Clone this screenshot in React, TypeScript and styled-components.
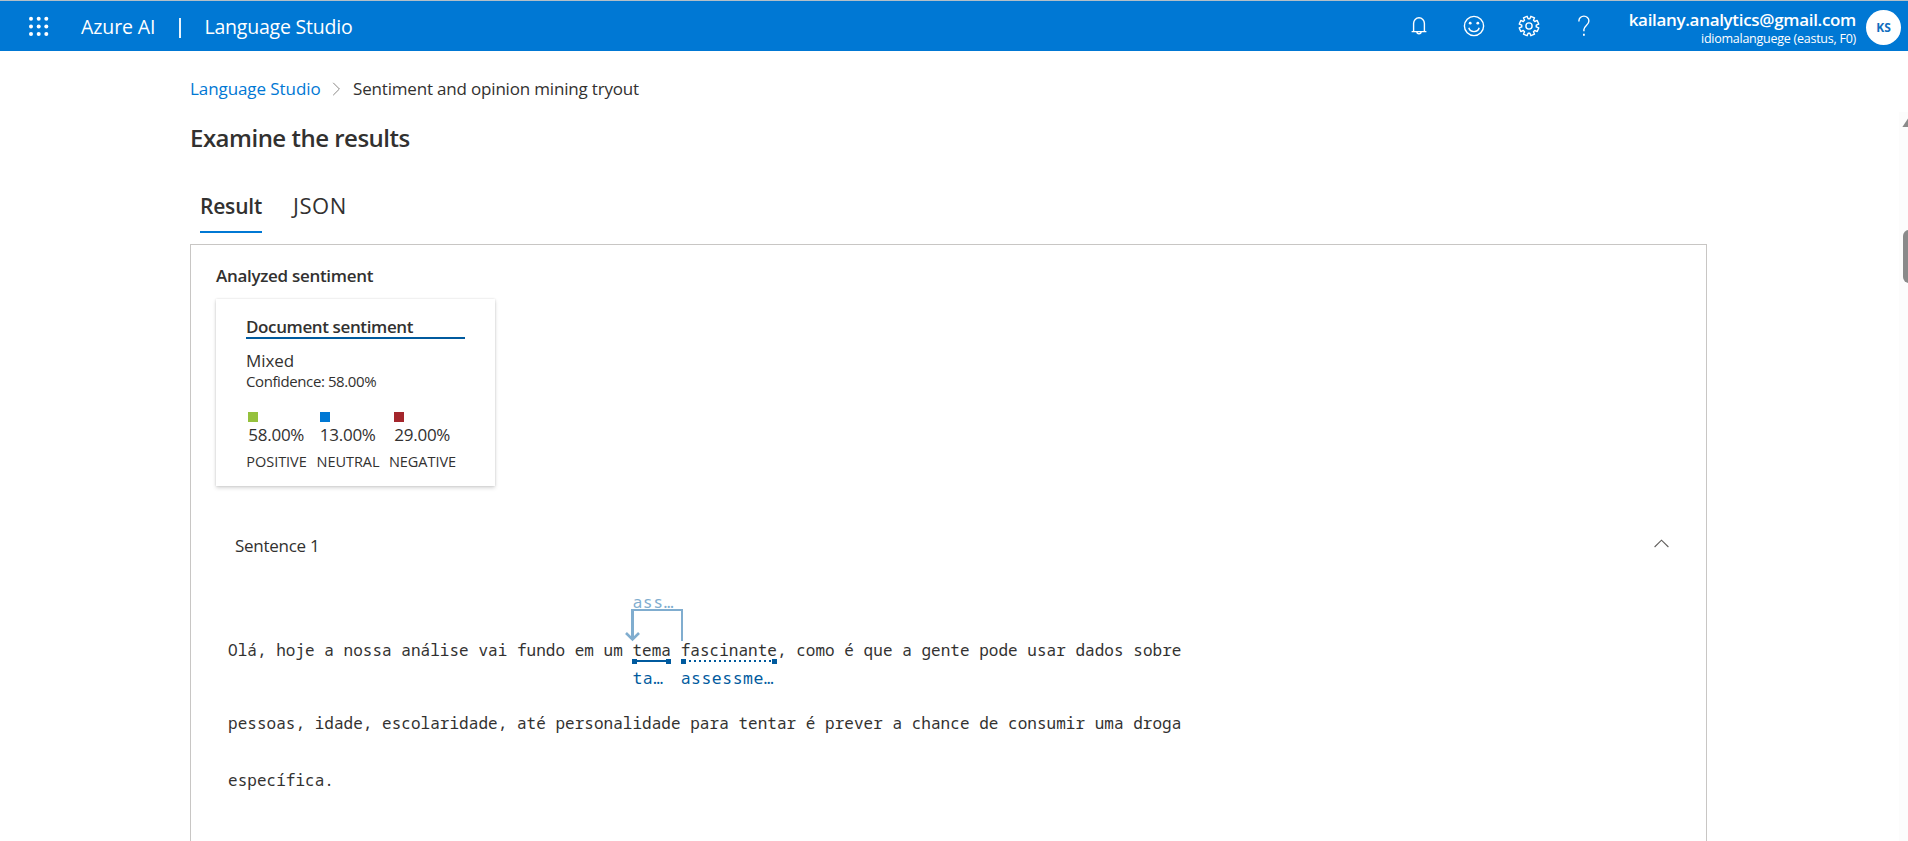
import React from 'react';
import styled, { createGlobalStyle } from 'styled-components';

const blue = '#0078d4';
const darkBlue = '#005a9e';
const paleBlue = '#80adcf';
const ink = '#323130';

const GlobalStyle = createGlobalStyle`
  * { box-sizing: border-box; }
  body {
    margin: 0;
    overflow: hidden;
    background: #fff;
    color: ${ink};
    font-family: 'Open Sans', 'Noto Sans', sans-serif;
    font-size: 17px;
  }
`;

const Page = styled.div`
  display: flex;
  flex-direction: column;
  height: 841px;
  overflow: hidden;
`;

const Header = styled.header`
  display: flex;
  align-items: center;
  flex: none;
  height: 51px;
  padding: 0 7px 0 29px;
  border-top: 1px solid #b3bfc7;
  background: ${blue};
  color: #fff;
`;

const Product = styled.span<{ $spacing: number }>`
  font-size: 19.5px;
  line-height: 28px;
  letter-spacing: ${p => p.$spacing}px;
  white-space: nowrap;
  padding-top: 1px;
`;

const Brand = styled.div`
  display: flex;
  align-items: center;
  margin-left: 32px;
`;

const Divider = styled.span`
  width: 2px;
  height: 20px;
  margin: 4px 23px 0 24px;
  background: #e8f3fc;
`;

const Tools = styled.nav`
  display: flex;
  margin-left: auto;
`;

const Tool = styled.button`
  display: flex;
  align-items: center;
  justify-content: center;
  width: 55px;
  height: 50px;
  padding: 0;
  border: 0;
  background: none;
  color: #fff;
`;

const Account = styled.div`
  display: flex;
  flex-direction: column;
  align-items: flex-end;
  gap: 1px;
  width: 245px;
  margin-top: 3px;
  white-space: nowrap;
`;

const Email = styled.span`
  font-weight: 600;
  line-height: 21px;
  letter-spacing: -0.32px;
`;

const Resource = styled.span`
  font-size: 12.5px;
  line-height: 15px;
  letter-spacing: -0.25px;
`;

const Avatar = styled.span`
  display: flex;
  align-items: center;
  justify-content: center;
  width: 35px;
  height: 35px;
  margin-left: 10px;
  margin-top: 2px;
  border-radius: 50%;
  background: #fff;
  color: #106ebe;
  font-size: 12px;
  font-weight: 700;
`;

const Body = styled.div`
  display: flex;
  flex: 1;
  min-height: 0;
`;

const Main = styled.main`
  display: flex;
  flex-direction: column;
  flex: 1;
  padding: 26px 201px 0 190px;
`;

const Breadcrumb = styled.div`
  display: flex;
  align-items: center;
  height: 24px;
  line-height: 24px;
  white-space: nowrap;
`;

const CrumbLink = styled.a`
  color: ${blue};
  letter-spacing: -0.08px;
  width: 142px;
`;

const Crumb = styled.span`
  margin-left: 12px;
  letter-spacing: -0.18px;
`;

const Heading = styled.h1`
  margin: 21px 0 0;
  font-size: 24px;
  font-weight: 600;
  line-height: 32px;
  letter-spacing: -0.5px;
`;

const Tabs = styled.div`
  display: flex;
  gap: 31px;
  margin: 38px 0 0 10px;
`;

const Tab = styled.div<{ $active?: boolean }>`
  height: 41px;
  line-height: ${p => (p.$active ? 28 : 26)}px;
  font-size: ${p => (p.$active ? 21 : 22)}px;
  font-weight: ${p => (p.$active ? 600 : 400)};
  letter-spacing: ${p => (p.$active ? -0.2 : 0.5)}px;
  border-bottom: 2px solid ${p => (p.$active ? blue : 'transparent')};
`;

const Panel = styled.section`
  display: flex;
  flex-direction: column;
  flex: 1;
  margin-top: 11px;
  padding-top: 19px;
  border: 1px solid #c8c6c4;
  border-bottom: 0;
`;

const SectionTitle = styled.h2`
  margin: 0 25px;
  font-size: 17px;
  font-weight: 600;
  line-height: 24px;
  letter-spacing: -0.3px;
`;

const Card = styled.div`
  width: 279px;
  height: 187px;
  margin: 11px 0 0 25px;
  padding: 16px 30px 0;
  background: #fff;
  box-shadow: 0 2px 4px rgba(0, 0, 0, 0.16), 0 0 2px rgba(0, 0, 0, 0.12);
`;

const CardTitle = styled.h3`
  margin: 0;
  height: 24px;
  border-bottom: 2px solid ${darkBlue};
  font-size: 17px;
  font-weight: 600;
  line-height: 24px;
  letter-spacing: -0.38px;
`;

const Verdict = styled.div`
  margin-top: 11px;
  line-height: 22px;
  letter-spacing: -0.1px;
`;

const Confidence = styled.div`
  font-size: 15px;
  line-height: 18px;
  letter-spacing: -0.4px;
`;

const Metrics = styled.div`
  display: grid;
  grid-template-columns: 61px 63px 67px;
  column-gap: 9.5px;
  justify-items: center;
  margin: 22px -6px 0 0;
`;

const Metric = styled.div`
  display: flex;
  flex-direction: column;
  align-items: center;
`;

const Value = styled.div`
  display: flex;
  flex-direction: column;
  width: 56.5px;
  line-height: 26px;
  letter-spacing: -0.25px;
`;

const Swatch = styled.span<{ $color: string }>`
  width: 10px;
  height: 10px;
  background: ${p => p.$color};
`;

const Label = styled.div`
  margin-top: 3px;
  font-size: 14.5px;
  line-height: 22px;
  letter-spacing: -0.05px;
`;

const SentenceHeader = styled.div`
  display: flex;
  align-items: center;
  justify-content: space-between;
  height: 24px;
  margin: 47px 37px 0 44px;
  letter-spacing: -0.27px;

  & > svg {
    margin-bottom: 4px;
  }
`;

const Transcript = styled.div`
  margin: 65px 0 0 37px;
  font-family: 'Noto Sans Mono', 'DejaVu Sans Mono', monospace;
  font-size: 16px;
  letter-spacing: 0.03px;
  white-space: pre;
`;

const Line = styled.div<{ $annotated?: boolean }>`
  line-height: 57px;
  height: ${p => (p.$annotated ? 73 : 57)}px;
`;

const Entity = styled.span`
  position: relative;
`;

const Marker = styled.span<{ $dotted?: boolean }>`
  position: absolute;
  left: 0;
  right: 0;
  top: 20px;
  display: flex;
  align-items: center;
  justify-content: space-between;
  height: 5px;

  &::before,
  &::after {
    content: '';
    width: 5px;
    height: 5px;
    background: ${darkBlue};
  }

  & > i {
    flex: 1;
    height: 2px;
    margin-bottom: 1px;
    background: ${p =>
      p.$dotted
        ? `repeating-linear-gradient(90deg, transparent 0 3px, ${darkBlue} 3px 5px)`
        : darkBlue};
  }
`;

const Note = styled.span<{ $above?: boolean }>`
  position: absolute;
  left: 0;
  top: ${p => (p.$above ? -48 : 28)}px;
  color: ${p => (p.$above ? paleBlue : darkBlue)};
  font-size: 16.5px;
  letter-spacing: 0.5px;
  line-height: 22px;
`;

const Relation = styled.svg`
  position: absolute;
  left: -7.5px;
  top: -32px;
`;

const Scrollbar = styled.div`
  display: flex;
  flex-direction: column;
  align-items: flex-start;
  width: 9px;
  height: 729px;
  margin-left: -9px;
  margin-top: 61px;
  padding: 6px 0 0 3px;
  overflow: hidden;
  background: #fcfcfc;
`;

const Thumb = styled.div`
  flex: none;
  width: 12px;
  height: 53px;
  margin: 103px 0 0 1px;
  border-radius: 6px;
  background: #8a8a8a;
`;

const gearPath = (() => {
  const c = 11;
  const pts: string[] = [];
  for (let i = 0; i < 8; i++) {
    const a = (i * Math.PI) / 4 + Math.PI / 8;
    [[-0.27, 7.3], [-0.2, 9.9], [0.2, 9.9], [0.27, 7.3]].forEach(([d, r]) => {
      pts.push(`${(c + r * Math.cos(a + d)).toFixed(2)} ${(c + r * Math.sin(a + d)).toFixed(2)}`);
    });
  }
  return `M${pts.join('L')}Z`;
})();

const Waffle = () => (
  <svg width="20" height="20" viewBox="0 0 20 20" fill="#fff">
    {[2, 9.7, 17.3].map(y => [2, 9.7, 17.3].map(x => <circle key={`${x}-${y}`} cx={x} cy={y + 0.7} r="2" />))}
  </svg>
);

const Bell = () => (
  <svg width="16" height="20" viewBox="0 0 16 20" fill="none" stroke="currentColor" strokeWidth="1.4">
    <path d="M2.6 15.5V7.4a5.4 5.6 0 0 1 10.8 0v8.1M0.6 15.6h14.8M5.9 15.8a2.1 2 0 0 0 4.2 0" />
  </svg>
);

const Smile = () => (
  <svg width="22" height="22" viewBox="0 0 22 22" fill="none" stroke="currentColor" strokeWidth="1.4">
    <circle cx="11" cy="11" r="9.6" />
    <path d="M5.8 12.8a5.4 5.2 0 0 0 10.4 0" />
    <circle cx="7.2" cy="8.2" r="1.4" fill="currentColor" stroke="none" />
    <circle cx="14.8" cy="8.2" r="1.4" fill="currentColor" stroke="none" />
  </svg>
);

const Gear = () => (
  <svg width="22" height="22" viewBox="0 0 22 22" fill="none" stroke="currentColor" strokeWidth="1.4" strokeLinejoin="round">
    <path d={gearPath} />
    <circle cx="11" cy="11" r="3.1" />
  </svg>
);

const Help = () => (
  <svg width="12" height="22" viewBox="0 0 12 22" fill="none" stroke="currentColor" strokeWidth="1.4">
    <path d="M0.9 6.6V6a5 4.9 0 0 1 10 0c0 4.2-5 4.6-5 8.6v1.6" />
    <path d="M5.9 18.8v2" strokeWidth="1.8" />
  </svg>
);

const metrics = [
  { value: '58.00%', label: 'POSITIVE', color: '#95c13d' },
  { value: '13.00%', label: 'NEUTRAL', color: blue },
  { value: '29.00%', label: 'NEGATIVE', color: '#a4262c' },
];

export default function App() {
  return (
    <Page>
      <GlobalStyle />
      <Header>
        <Waffle />
        <Brand>
          <Product $spacing={-0.1}>Azure AI</Product>
          <Divider />
          <Product $spacing={-0.2}>Language Studio</Product>
        </Brand>
        <Tools>
          <Tool><Bell /></Tool>
          <Tool><Smile /></Tool>
          <Tool><Gear /></Tool>
          <Tool><Help /></Tool>
        </Tools>
        <Account>
          <Email>kailany.analytics@gmail.com</Email>
          <Resource>idiomalanguege (eastus, F0)</Resource>
        </Account>
        <Avatar>KS</Avatar>
      </Header>
      <Body>
        <Main>
          <Breadcrumb>
            <CrumbLink>Language Studio</CrumbLink>
            <svg width="9" height="14" viewBox="0 0 9 14" fill="none" stroke="#8a8886" strokeWidth="1">
              <path d="M1.2 0.8L7.4 7L1.2 13.2" />
            </svg>
            <Crumb>Sentiment and opinion mining tryout</Crumb>
          </Breadcrumb>
          <Heading>Examine the results</Heading>
          <Tabs>
            <Tab $active>Result</Tab>
            <Tab>JSON</Tab>
          </Tabs>
          <Panel>
            <SectionTitle>Analyzed sentiment</SectionTitle>
            <Card>
              <CardTitle>Document sentiment</CardTitle>
              <Verdict>Mixed</Verdict>
              <Confidence>Confidence: 58.00%</Confidence>
              <Metrics>
                {metrics.map(m => (
                  <Metric key={m.label}>
                    <Value>
                      <Swatch $color={m.color} />
                      {m.value}
                    </Value>
                    <Label>{m.label}</Label>
                  </Metric>
                ))}
              </Metrics>
            </Card>
            <SentenceHeader>
              Sentence 1
              <svg width="15" height="9" viewBox="0 0 15 9" fill="none" stroke="#605e5c" strokeWidth="1.1">
                <path d="M0.6 8L7.5 1.2L14.4 8" />
              </svg>
            </SentenceHeader>
            <Transcript>
              <Line $annotated>
                {'Olá, hoje a nossa análise vai fundo em um '}
                <Entity>
                  tema
                  <Marker><i /></Marker>
                  <Note $above>ass…</Note>
                  <Note>ta…</Note>
                  <Relation width="60" height="36" viewBox="0 0 60 36" fill="none" stroke={paleBlue}>
                    <path d="M6 3H57V34" strokeWidth="2" />
                    <path d="M7.5 3V32" strokeWidth="3" />
                    <path d="M1 26L7.5 32.5L14 26" strokeWidth="2.6" />
                  </Relation>
                </Entity>{' '}
                <Entity>
                  fascinante
                  <Marker $dotted><i /></Marker>
                  <Note>assessme…</Note>
                </Entity>
                , como é que a gente pode usar dados sobre
              </Line>
              <Line>pessoas, idade, escolaridade, até personalidade para tentar é prever a chance de consumir uma droga</Line>
              <Line>específica.</Line>
            </Transcript>
          </Panel>
        </Main>
        <Scrollbar>
          <svg width="12" height="9" viewBox="0 0 12 9" fill="#8a8a8a">
            <path d="M0.4 9L6 0.6L11.6 9Z" />
          </svg>
          <Thumb />
        </Scrollbar>
      </Body>
    </Page>
  );
}
